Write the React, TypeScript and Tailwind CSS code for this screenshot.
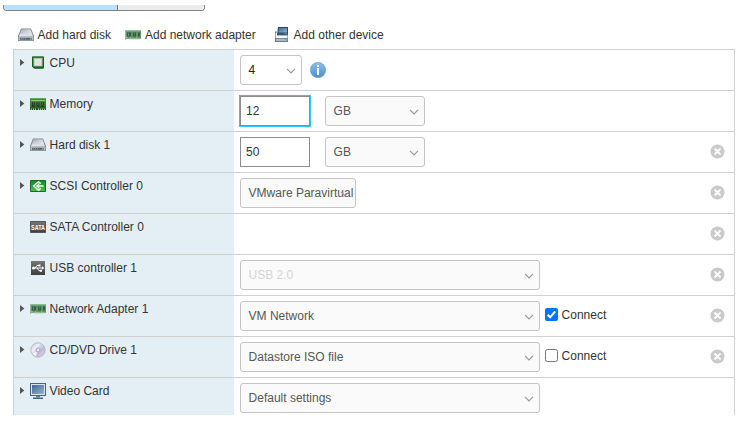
import React from "react";

type IconName = "disk" | "net" | "other" | "cpu" | "memory" | "scsi" | "sata" | "usb" | "cd" | "video";

function DeviceIcon({ name }: { name: IconName }) {
  return (
    <svg width="16" height="16" viewBox="0 0 16 16" className="block shrink-0">
      <defs>
        <linearGradient id="silver" x1="0" y1="0" x2="1" y2="1">
          <stop offset="0" stopColor="#9aa5b0" />
          <stop offset="0.5" stopColor="#d3d8dd" />
          <stop offset="1" stopColor="#b2b9c0" />
        </linearGradient>
        <linearGradient id="green" x1="0" y1="0" x2="0" y2="1">
          <stop offset="0" stopColor="#4fa03f" />
          <stop offset="1" stopColor="#115c18" />
        </linearGradient>
        <linearGradient id="scsi" x1="0" y1="0" x2="0" y2="1">
          <stop offset="0" stopColor="#168a22" />
          <stop offset="1" stopColor="#4dc050" />
        </linearGradient>
        <linearGradient id="dark" x1="0" y1="0" x2="0" y2="1">
          <stop offset="0" stopColor="#777" />
          <stop offset="1" stopColor="#3e3e3e" />
        </linearGradient>
        <linearGradient id="blue" x1="0" y1="0" x2="1" y2="1">
          <stop offset="0" stopColor="#3e6791" />
          <stop offset="1" stopColor="#93b4d2" />
        </linearGradient>
        <linearGradient id="disc" x1="0" y1="0" x2="1" y2="1">
          <stop offset="0" stopColor="#c3c3cc" />
          <stop offset="0.35" stopColor="#f1eff6" />
          <stop offset="0.6" stopColor="#c1b7da" />
          <stop offset="1" stopColor="#dcdee4" />
        </linearGradient>
      </defs>
      {name === "disk" && (
        <g>
          <path d="M3 1.5h10L16 9v5H0V9z" fill="#808a94" />
          <path d="M3.6 2.2h8.8L15 9.4H1z" fill="url(#silver)" />
          <path d="M2.2 6.5Q8 9.5 12.8 3.4L15 9.4H1z" fill="#e5e8eb" opacity=".75" />
          <path d="M.7 9.8h14.6v3.5H.7z" fill="#b7bec5" />
          <path d="M2 10.8h12v2H2z" fill="#59636d" />
          <path d="M3 11.3h1v1H3zM5 11.3h1v1H5zM7 11.3h1v1H7z" fill="#929ba3" />
          <path d="M12 11.2h1.5v1.2H12z" fill="#8edb57" />
        </g>
      )}
      {name === "net" && (
        <g transform="translate(0 1)">
          <path d="M0 2.5h16v8.3H0z" fill="#579a67" />
          <path d="M1 2.5h15v1H1z" fill="#79b37c" />
          <path d="M2 4.5h4v4H2zM8 4.5h3v4H8zM13 4.5h2v4h-2z" fill="#3f5747" />
          <path d="M3 5.5h1v2H3zM9 5.5h1v1H9z" fill="#7f9586" />
          <path d="M1 9h2v1H1zM5 9h1v1H5zM11 9h1v1h-1z" fill="#8dbd85" />
          <path d="M4 10h11v1.3H4z" fill="#96b985" />
          <path d="M0 2h1v10H0z" fill="#9bb3a8" />
        </g>
      )}
      {name === "other" && (
        <g>
          <path d="M4 0h10v8H3z" fill="#294764" />
          <path d="M4.8 1h8.2v4.5H4.3z" fill="url(#blue)" />
          <path d="M3 6h11v2H3z" fill="#355678" />
          <path d="M1 4.5h2V8h11v7H1z" fill="#637d8f" />
          <path d="M1.7 5.5H3V8.5h10.5V11H1.7z" fill="#f8fafb" />
          <path d="M2 11.8h11.2v2.2H2z" fill="#a9bdc9" />
          <path d="M10.5 6.3h2v1h-2zM10.5 12.3h2v1h-2z" fill="#62bc27" />
        </g>
      )}
      {name === "cpu" && (
        <g transform="translate(0 -.5)">
          <path d="M2 2h12v11l-1 1H4l-2-2z" fill="url(#green)" />
          <path d="M2.5 2.5h11v11h-9l-2-2z" fill="none" stroke="#0d6020" />
          <path d="M3.5 3.5h9V12h-9z" fill="#a3aaa4" />
          <path d="M4.3 4.2h7.4v7H4.3z" fill="#e1e3e2" />
        </g>
      )}
      {name === "memory" && (
        <g>
          <path d="M0 2.5h16V14H0z" fill="url(#green)" />
          <path d="M0 2.5h16v1H0z" fill="#2d7e2d" />
          <path d="M1 4h14v1H1z" fill="#8aca6a" />
          <path d="M2 6h3v5H2zM6.5 6h3v5h-3zM11 6h3v5h-3z" fill="#283c2b" />
          <path d="M3 6h1v3H3zM7.5 6h1v3h-1zM12 6h1v3h-1z" fill="#546258" />
          <path d="M1 12.5h1V14H1zM3 12.5h1V14H3zM5 12.5h1V14H5zM8 12.5h1V14H8zM10 12.5h1V14h-1zM12 12.5h1V14h-1zM14 12.5h1V14h-1z" fill="#b5c76a" />
        </g>
      )}
      {name === "scsi" && (
        <g>
          <path d="M.5 2.5h15v11H.5z" fill="url(#scsi)" stroke="#176c20" />
          <path d="M10.7 5.6 8.5 3.7 3.7 8l4.8 4.3 2.2-1.9" fill="none" stroke="#effff0" strokeWidth="1.4" />
          <path d="M6.5 8h7M9.3 5.8 6.8 8l2.5 2.2" fill="none" stroke="#effff0" strokeWidth="1.3" />
        </g>
      )}
      {name === "sata" && (
        <g>
          <path d="M.5 2.5h15v11H.5z" fill="url(#dark)" stroke="#555" />
          <text x="1" y="10.5" fill="#fff" fontFamily="Liberation Sans, Arial, sans-serif" fontWeight="bold" fontSize="6.4" textLength="14" lengthAdjust="spacingAndGlyphs">SATA</text>
        </g>
      )}
      {name === "usb" && (
        <g>
          <path d="M1 1h14v14H1z" fill="url(#dark)" />
          <path d="M3 8h10M5 8l2-2.5h2M7 8l2 2.7h2" fill="none" stroke="#fff" />
          <circle cx="3.5" cy="8" r="1.5" fill="#fff" />
          <path d="m12 6.2 2.4 1.8L12 9.8zM8.5 4.5h2v2h-2zM10 9.7h2v2h-2z" fill="#fff" />
        </g>
      )}
      {name === "cd" && (
        <g>
          <circle cx="8" cy="8" r="7.2" fill="url(#disc)" stroke="#a5a7af" strokeWidth=".7" />
          <path d="m8 8 2.2-6.5L13.6 4z" fill="#c5d4e9" opacity=".8" />
          <path d="m8 8-5.4 4 3.2 2.3z" fill="#fff" opacity=".8" />
          <circle cx="8" cy="8" r="2.5" fill="#b3aacb" />
          <circle cx="8" cy="8" r="1.3" fill="#f8f8fb" stroke="#c1bfce" strokeWidth=".5" />
        </g>
      )}
      {name === "video" && (
        <g>
          <path d="M0 0h16v13H0z" fill="#46617d" />
          <path d="M1 1h14v11H1z" fill="#dce5ed" />
          <path d="M2 2h12v9H2z" fill="url(#blue)" />
          <path d="M6 13h4v1.5H6z" fill="#6a8298" />
          <path d="M3 14.5h10V16H3z" fill="#46617d" />
        </g>
      )}
    </svg>
  );
}

function Select({ value, className, disabled }: { value: string; className: string; disabled?: boolean }) {
  return (
    <div className={`relative flex h-[30px] shrink-0 items-center rounded-[3px] border border-[#c4c4c4] pl-[7.6px] ${disabled ? "text-[#d4d4d4]" : ""} ${className}`}>
      <span className="whitespace-nowrap">{value}</span>
      <svg width="10" height="6" viewBox="0 0 10 6" className="absolute right-[5px] top-[12px]">
        <path d="M1 .8 5 4.8 9 .8" fill="none" stroke="#999" strokeWidth="1.2" />
      </svg>
    </div>
  );
}

function Field({ value, focused }: { value: string; focused?: boolean }) {
  return (
    <div className={`mr-[15px] flex h-[30px] w-[70px] shrink-0 items-center border border-[#8c8c8c] bg-white pl-[5px] text-[#333] ${focused ? "outline outline-1 outline-[#33c6f4]" : ""}`}>
      {value}
    </div>
  );
}

function Connect({ checked }: { checked?: boolean }) {
  return (
    <div className="ml-[5px] flex items-start gap-[3.6px] self-start pt-[7px] text-[#333]">
      <svg width="13" height="13" viewBox="0 0 13 13">
        {checked ? (
          <>
            <rect width="13" height="13" rx="2" fill="#0075ff" />
            <path d="m2.6 6.8 2.5 2.5 5.1-6" fill="none" stroke="#fff" strokeWidth="2" />
          </>
        ) : (
          <rect x=".5" y=".5" width="12" height="12" rx="2" fill="#fff" stroke="#767676" />
        )}
      </svg>
      <span className="leading-[14px]">Connect</span>
    </div>
  );
}

function Info() {
  return (
    <svg width="16" height="16" viewBox="0 0 16 16" className="ml-2">
      <defs>
        <linearGradient id="info" x1="0" y1="0" x2="0" y2="1">
          <stop offset="0" stopColor="#8abff0" />
          <stop offset="1" stopColor="#4b8ecb" />
        </linearGradient>
      </defs>
      <circle cx="8" cy="8" r="7.7" fill="url(#info)" stroke="#5c97d0" strokeWidth=".5" />
      <path d="M7 3h2v2H7zM7 6h2v7H7z" fill="#fff" />
    </svg>
  );
}

interface RowData {
  label: string;
  icon: IconName;
  arrow?: boolean;
  removable?: boolean;
  control?: React.ReactNode;
}

const rows: RowData[] = [
  { label: "CPU", icon: "cpu", arrow: true, control: <><Select value="4" className="w-[62px] bg-white text-[#222]" /><Info /></> },
  { label: "Memory", icon: "memory", arrow: true, control: <><Field value="12" focused /><Select value="GB" className="w-[100px] bg-[#fafafa]" /></> },
  { label: "Hard disk 1", icon: "disk", arrow: true, removable: true, control: <><Field value="50" /><Select value="GB" className="w-[100px] bg-[#fafafa]" /></> },
  { label: "SCSI Controller 0", icon: "scsi", arrow: true, removable: true, control: <Select value="VMware Paravirtual" className="w-[116px] bg-[#fafafa]" /> },
  { label: "SATA Controller 0", icon: "sata", removable: true },
  { label: "USB controller 1", icon: "usb", removable: true, control: <Select value="USB 2.0" disabled className="w-[300px] bg-[#fafafa]" /> },
  { label: "Network Adapter 1", icon: "net", arrow: true, removable: true, control: <><Select value="VM Network" className="w-[300px] bg-[#fafafa]" /><Connect checked /></> },
  { label: "CD/DVD Drive 1", icon: "cd", arrow: true, removable: true, control: <><Select value="Datastore ISO file" className="w-[300px] bg-[#fafafa]" /><Connect /></> },
  { label: "Video Card", icon: "video", arrow: true, control: <Select value="Default settings" className="w-[300px] bg-[#fafafa]" /> },
];

function Row({ row }: { row: RowData }) {
  return (
    <div className="flex h-[41px] shrink-0 border-t border-[#d0d0d0]">
      <div className="flex w-[220px] items-start bg-[#e4eff5] pl-[6px] pt-[5px]">
        <svg width="5" height="8" viewBox="0 0 5 8" className="mr-[5px] mt-1 shrink-0">
          {row.arrow && <path d="M0 0v7l4.3-3.5z" fill="#555" />}
        </svg>
        <DeviceIcon name={row.icon} />
        <span className="ml-[3.6px] leading-4">{row.label}</span>
      </div>
      <div className="flex flex-1 items-start pl-[6px] pt-[5px]">
        <div className="flex h-[30px] items-center text-[#565656]">{row.control}</div>
      </div>
      {row.removable && (
        <svg width="15" height="15" viewBox="0 0 15 15" className="mr-[9px] mt-[12px]">
          <circle cx="7.5" cy="7.5" r="7" fill="#cacaca" />
          <path d="m4.5 4.5 6 6M10.5 4.5l-6 6" stroke="#fff" strokeWidth="1.8" />
        </svg>
      )}
    </div>
  );
}

export default function App() {
  return (
    <div className="h-[423px] w-[748px] overflow-hidden bg-white pt-[5px] font-['Liberation_Sans',Arial,sans-serif] text-[12px] text-[#333]">
      <div className="ml-[3px] flex h-[6px] w-[202px] overflow-hidden rounded-b-[4px] border border-t-0 border-[#7e7e7e]">
        <div className="w-[114px] border-r border-[#737373] bg-[#b9e0fc]" />
        <div className="flex-1 bg-[#ececec]" />
      </div>
      <div className="flex h-[38px] items-center pl-[18px] pt-[9px]">
        <div className="flex w-[107px] items-center gap-[3.6px]"><DeviceIcon name="disk" />Add hard disk</div>
        <div className="flex w-[149px] items-center gap-1"><DeviceIcon name="net" />Add network adapter</div>
        <div className="flex items-center gap-[3.6px]"><DeviceIcon name="other" />Add other device</div>
      </div>
      <div className="ml-[13px] flex h-[366px] w-[722px] flex-col overflow-hidden border-x border-[#d0d0d0]">
        {rows.map((row) => <Row key={row.label} row={row} />)}
      </div>
    </div>
  );
}
